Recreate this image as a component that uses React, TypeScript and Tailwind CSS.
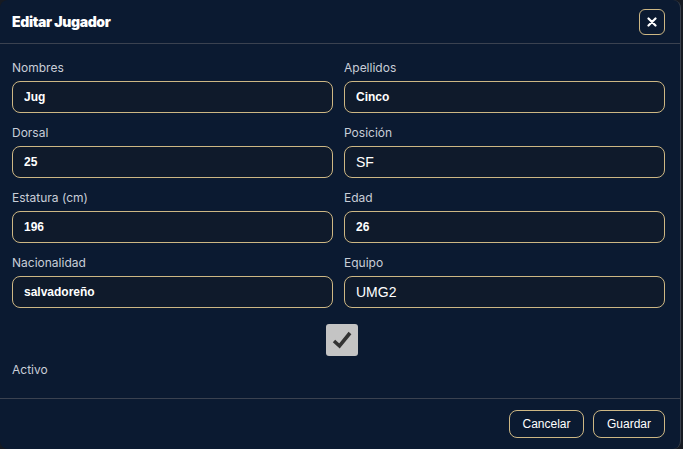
import { useState } from 'react';

const labelFont = { fontFamily: 'Inter, "Noto Sans", sans-serif' };
const valueFont = { fontFamily: '"Liberation Sans", Arial, sans-serif' };

interface FieldProps {
  label: string;
  value: string;
  select?: boolean;
}

function Field({ label, value, select }: FieldProps) {
  return (
    <div className="flex flex-col">
      <label className="text-[12px] leading-4 text-[#c9ced8] mb-[5px]" style={labelFont}>
        {label}
      </label>
      <input
        defaultValue={value}
        className={
          select
            ? 'h-8 w-full rounded-lg border border-[#cdb784] bg-[#0f1a2b] px-[11px] text-[14px] text-white outline-none'
            : 'h-8 w-full rounded-lg border border-[#cdb784] bg-[#0f1a2b] px-[11px] text-[12px] font-semibold text-white outline-none'
        }
        style={valueFont}
      />
    </div>
  );
}

export default function App() {
  const [activo, setActivo] = useState(true);

  const fields: FieldProps[] = [
    { label: 'Nombres', value: 'Jug' },
    { label: 'Apellidos', value: 'Cinco' },
    { label: 'Dorsal', value: '25' },
    { label: 'Posición', value: 'SF', select: true },
    { label: 'Estatura (cm)', value: '196' },
    { label: 'Edad', value: '26' },
    { label: 'Nacionalidad', value: 'salvadoreño' },
    { label: 'Equipo', value: 'UMG2', select: true },
  ];

  return (
    <div className="w-[683px] h-[449px] bg-[#161a22] overflow-hidden">
      <div className="w-[681px] h-[449px] bg-[#0b1a31] rounded-lg border-r border-[#3a404c] flex flex-col">
        {/* header */}
        <div className="h-[44px] shrink-0 flex items-center justify-between pl-3 pr-[15px] border-b border-[#3b4250]">
          <h2 className="text-[14px] font-black text-white tracking-tight" style={labelFont}>
            Editar Jugador
          </h2>
          <button className="w-[26px] h-[26px] rounded-md border border-[#cdb784] flex items-center justify-center">
            <svg width="10" height="10" viewBox="0 0 10 10">
              <path d="M1.5 1.5 L8.5 8.5 M8.5 1.5 L1.5 8.5" stroke="white" strokeWidth="2.2" strokeLinecap="round" />
            </svg>
          </button>
        </div>

        {/* body */}
        <div className="flex-1 pt-4 pl-3 pr-[15px]">
          <div className="grid grid-cols-2 gap-x-[11px] gap-y-[12px]">
            {fields.map((f) => (
              <Field key={f.label} label={f.label} value={f.value} select={f.select} />
            ))}
          </div>
          <div className="flex justify-center pl-[6px] mt-4">
            <button
              onClick={() => setActivo(!activo)}
              className="w-8 h-8 rounded-[3px] bg-[#c4c4c4] flex items-center justify-center"
            >
              {activo && (
                <svg width="22" height="20" viewBox="0 0 22 20">
                  <path d="M3 11 L8.5 16 L19 3" stroke="#333" strokeWidth="3.6" fill="none" strokeLinejoin="miter" />
                </svg>
              )}
            </button>
          </div>
          <div className="text-[12px] leading-4 text-[#c9ced8] mt-[6px]" style={labelFont}>
            Activo
          </div>
        </div>

        {/* footer */}
        <div className="h-[51px] shrink-0 border-t border-[#3b4250] flex items-center justify-end gap-[9px] pr-[15px]">
          <button
            className="h-7 w-[75px] rounded-lg border border-[#cdb784] text-[12px] text-white"
            style={valueFont}
          >
            Cancelar
          </button>
          <button
            className="h-7 w-[72px] rounded-lg border border-[#cdb784] text-[12px] text-white"
            style={valueFont}
          >
            Guardar
          </button>
        </div>
      </div>
    </div>
  );
}
